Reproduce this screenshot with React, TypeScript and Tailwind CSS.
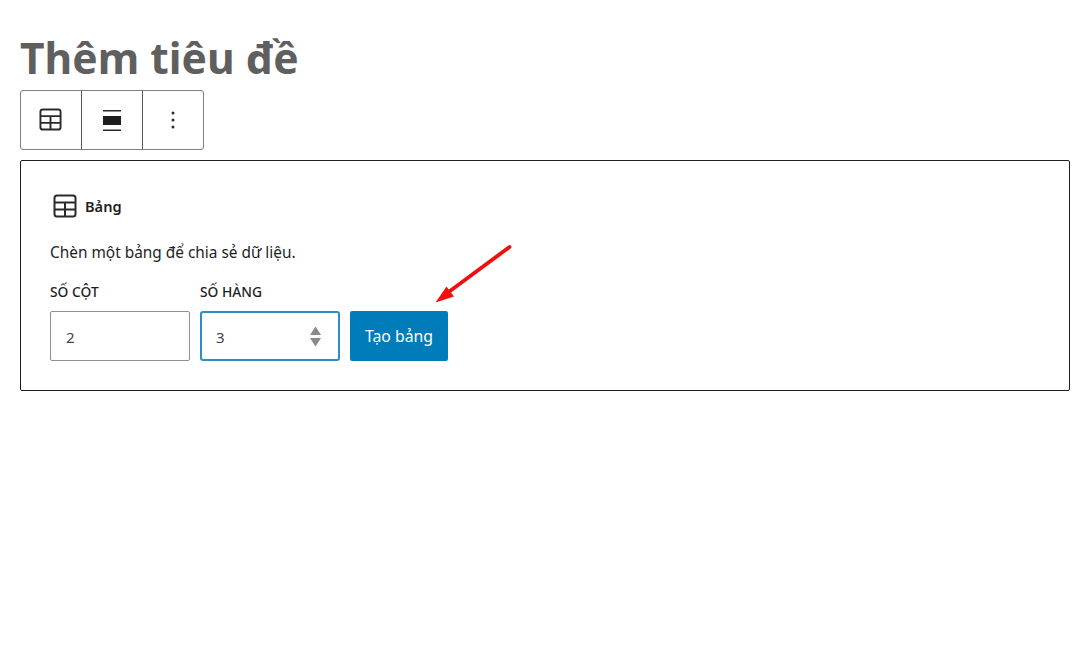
const font = { fontFamily: '"Noto Sans", "Open Sans", sans-serif' };

function TableIcon({ size }: { size: number }) {
  return (
    <svg width={size} height={size} viewBox="0 0 24 24" fill="none" stroke="#2a2a2a" strokeWidth="2">
      <rect x="1.5" y="1.5" width="21" height="21" rx="2.5" />
      <path d="M1.5 8.5h21M1.5 15.5h21M12 8.5v14" />
    </svg>
  );
}

export default function App() {
  return (
    <div className="relative w-[1091px] h-[646px] bg-white overflow-hidden px-[20px] pt-[30px]" style={font}>
      <h1 className="h-[60px] text-[42.6px] leading-[55px] font-bold text-[#5f5f5f]">Thêm tiêu đề</h1>
      <div className="flex w-[184px] h-[60px] border border-[#7e7e7e] rounded-[3px]">
        <div className="w-[61px] pb-[2px] pr-[1px] flex items-center justify-center border-r border-[#555]">
          <TableIcon size={23} />
        </div>
        <div className="w-[61px] flex items-center justify-center border-r border-[#555]">
          <svg width="18" height="21" viewBox="0 0 18 21">
            <rect x="0" y="0" width="18" height="1.5" fill="#2a2a2a" />
            <rect x="0" y="6" width="18" height="9" fill="#1e1e1e" />
            <rect x="0" y="19.5" width="18" height="1.5" fill="#2a2a2a" />
          </svg>
        </div>
        <div className="flex-1 flex items-center justify-center">
          <svg width="4" height="20" viewBox="0 0 4 20" fill="#2a2a2a">
            <circle cx="2" cy="3" r="1.5" />
            <circle cx="2" cy="10" r="1.5" />
            <circle cx="2" cy="17" r="1.5" />
          </svg>
        </div>
      </div>
      <div className="mt-[10px] w-[1050px] h-[231px] border border-[#1e1e1e] rounded-[2px] pl-[29px] pt-[33px]">
        <div className="flex items-center gap-[8px] h-[24px] pl-[3px]">
          <TableIcon size={24} />
          <span className="pt-[2px] text-[14.6px] font-semibold text-[#1e1e1e]">Bảng</span>
        </div>
        <p className="mt-[23px] h-[24px] text-[15.4px] leading-[24px] text-[#1e1e1e]">Chèn một bảng để chia sẻ dữ liệu.</p>
        <div className="mt-[18px] flex items-end gap-[10px]">
          <div className="flex flex-col w-[140px]">
            <span className="text-[13.8px] leading-[18px] font-medium text-[#1e1e1e] mb-[10px]">SỐ CỘT</span>
            <div className="h-[50px] pt-[2px] border border-[#8c8f94] rounded-[2px] flex items-center pl-[15px] text-[15px] text-[#3c434a]">2</div>
          </div>
          <div className="flex flex-col w-[140px]">
            <span className="text-[13.8px] leading-[18px] font-medium text-[#1e1e1e] mb-[10px]">SỐ HÀNG</span>
            <div className="h-[50px] border-2 border-[#2a8fc4] rounded-[3px] flex items-center justify-between pl-[14px] pr-[17px] text-[15px] text-[#3c434a]">
              <span className="pt-[2px]">3</span>
              <svg width="11" height="21" viewBox="0 0 11 21" fill="#8a8a8a">
                <path d="M5.5 0.5 L11 9 H0 Z" />
                <path d="M5.5 20.5 L11 12 H0 Z" />
              </svg>
            </div>
          </div>
          <button className="w-[98px] h-[50px] pt-[2px] bg-[#007cba] rounded-[2px] text-white text-[15.8px]">Tạo bảng</button>
        </div>
      </div>
      <svg className="absolute left-[430px] top-[240px]" width="86" height="66" viewBox="0 0 86 66" fill="#f00f0f">
        <path d="M79.5 7 L20 51" stroke="#f00f0f" strokeWidth="3.8" strokeLinecap="round" />
        <path d="M5.5 62.5 L16.5 46.5 L24 56.5 Z" />
      </svg>
    </div>
  );
}
